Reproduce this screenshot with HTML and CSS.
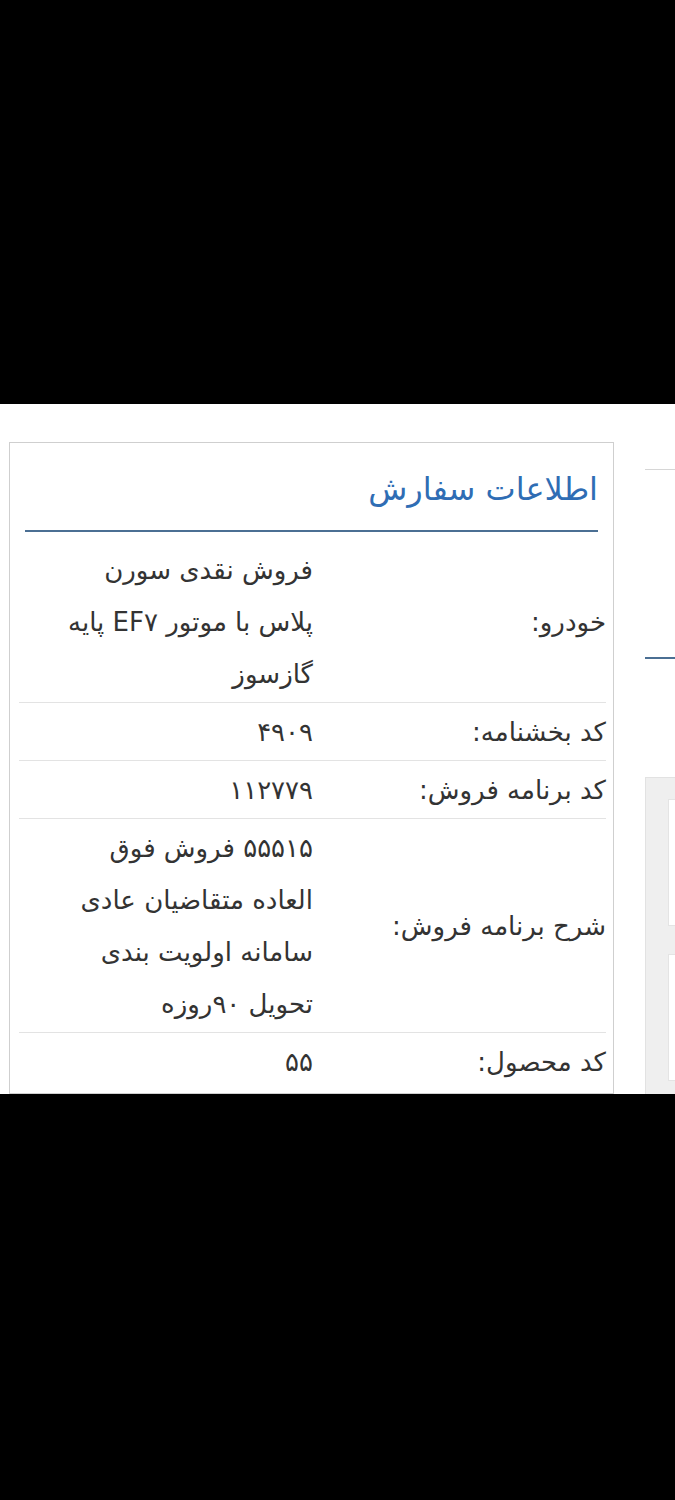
FILE: index.html
```html
<!DOCTYPE html>
<html lang="fa">
<head>
<meta charset="utf-8">
	<title>اطلاعات سفارش</title>

	<link rel="stylesheet" href="styles.css">
</head>
<body>

<div class="top-bar"></div>

<div class="page">
	<div class="card">
		<h2 class="card-title">اطلاعات سفارش</h2>
		<div class="info-list">
			<div class="info-row">
				<span class="label">خودرو:</span>
				<span class="value">فروش نقدی سورن پلاس با موتور EF۷ پایه گازسوز</span>
			</div>
			<div class="info-row">
				<span class="label">کد بخشنامه:</span>
				<span class="value">۴۹۰۹</span>
			</div>
			<div class="info-row">
				<span class="label">کد برنامه فروش:</span>
				<span class="value">۱۱۲۷۷۹</span>
			</div>
			<div class="info-row">
				<span class="label">شرح برنامه فروش:</span>
				<span class="value">۵۵۵۱۵ فروش فوق العاده متقاضیان عادی سامانه اولویت بندی تحویل ۹۰روزه</span>
			</div>
			<div class="info-row">
				<span class="label">کد محصول:</span>
				<span class="value">۵۵</span>
			</div>
		</div>
	</div>

	<div class="side">
		<div class="side-head"></div>
		<div class="side-panel">
			<div class="side-box"></div>
			<div class="side-box"></div>
		</div>
	</div>
</div>

</body>
</html>
```

FILE: styles.css
```css
body{
	margin: 0;
	background: #000;
	font-family: "DejaVu Sans", sans-serif;
}
.top-bar{
	height: 404px;
}
.page{
	height: 690px;
	overflow: hidden;
	background: #fff;
	display: flex;
	padding: 38px 0 0 9px;
	box-sizing: border-box;
}

.card{
	flex: none;
	width: 605px;
	box-sizing: border-box;
	border: 1px solid #cfcfcf;
	padding: 0 7px 0 9px;
	direction: rtl;
}
.card-title{
	margin: 0 8px 0 6px;
	padding: 22px 0 17px;
	font-size: 32px;
	font-weight: normal;
	line-height: 48px;
	color: #2f6db4;
	border-bottom: 2px solid #4b6f93;
}

.info-list{
	margin-top: 9px;
	color: #333;
	font-size: 26px;
}
.info-row{
	display: grid;
	grid-template-columns: 293px 1fr;
	padding: 3px 0 2px;
	line-height: 52px;
	border-bottom: 1px solid #e3e3e3;
}
.info-row:last-child{
	border-bottom: none;
}
.info-row .label{
	align-self: center;
}
.info-row .value{
	max-width: 255px;
}

.side{
	flex: none;
	width: 200px;
	margin-left: 31px;
}
.side-head{
	height: 187px;
	margin-top: 27px;
	border-top: 1px solid #d6d6d6;
	border-bottom: 2px solid #4b6f93;
}
.side-panel{
	margin-top: 118px;
	height: 400px;
	background: #efefef;
	border-top: 1px solid #e2e2e2;
	border-left: 1px solid #e2e2e2;
	padding: 21px 0 0 22px;
}
.side-box{
	height: 125px;
	background: #fff;
	border: 1px solid #e4e4e4;
	margin-bottom: 28px;
}
```
